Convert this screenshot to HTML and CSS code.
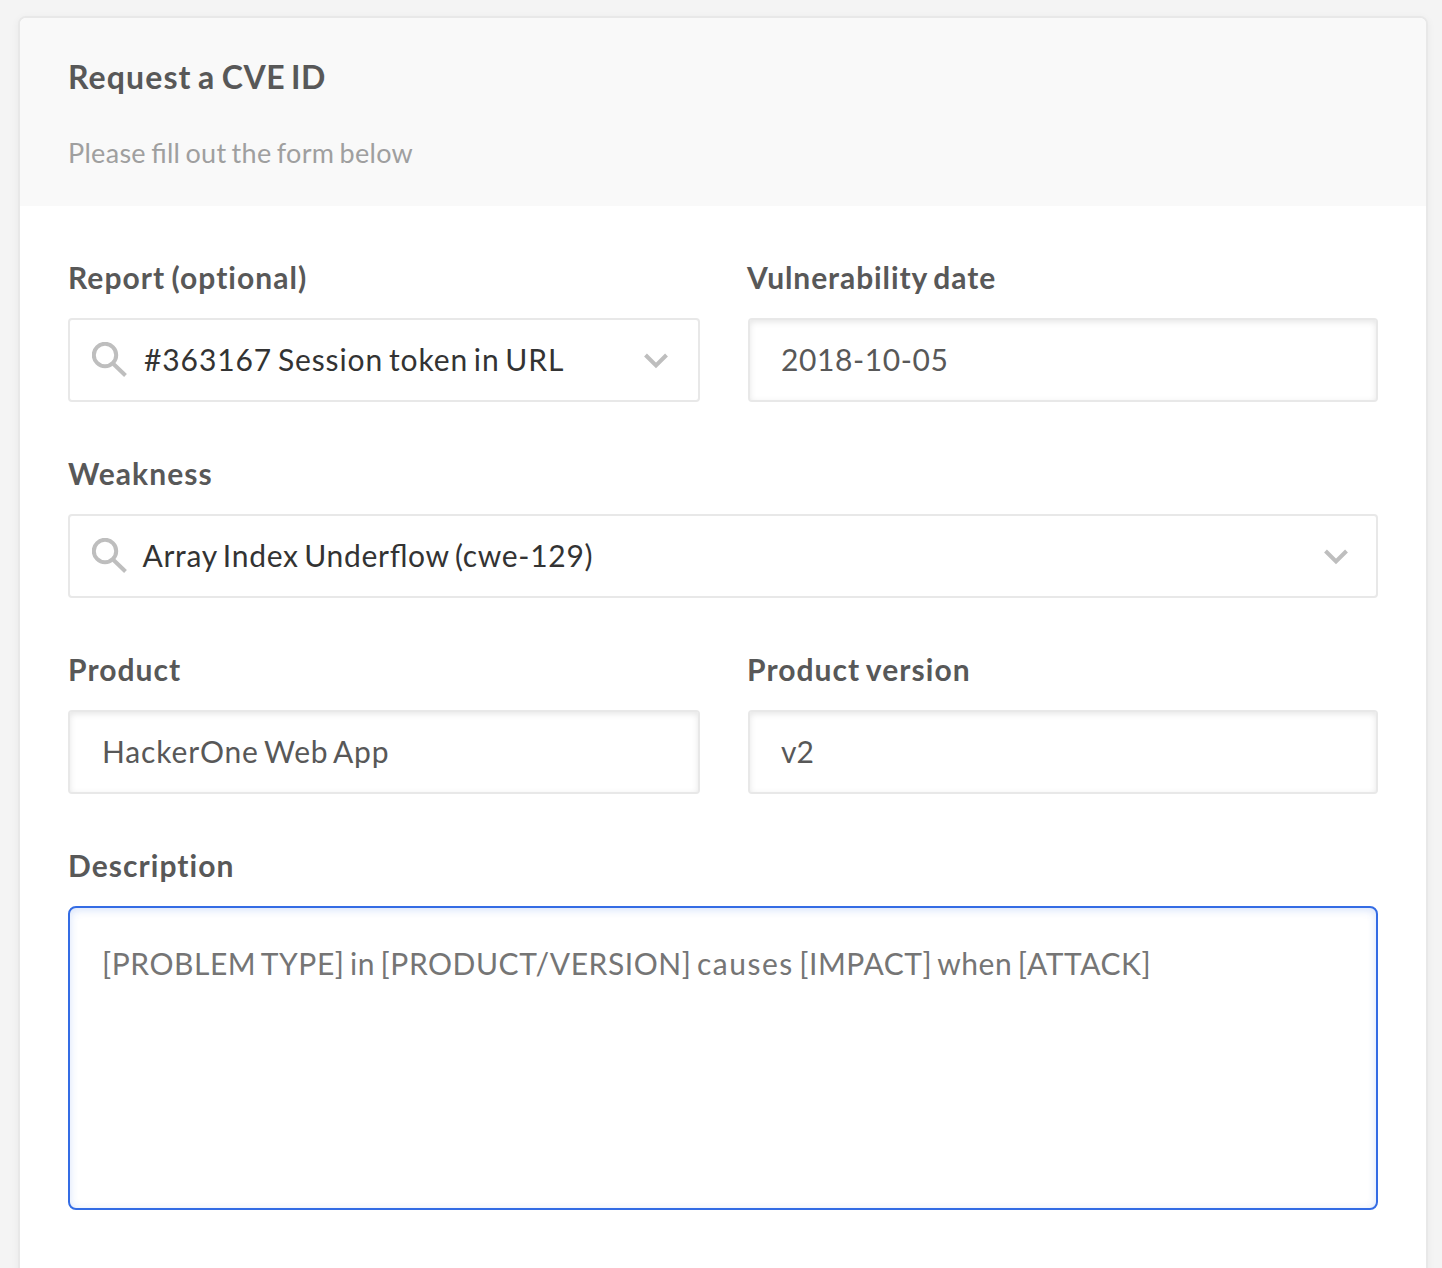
FILE: index.html
```html
<!DOCTYPE html>
<html lang="en">
<head>
<meta charset="utf-8">
<title>Request a CVE ID</title>
<link rel="stylesheet" href="styles.css">
</head>
<body>
<main class="card">
  <header class="card-header">
    <h1 class="title">Request a <span class="acronym">CVE ID</span></h1>
    <p class="subtitle">Please fill out the form below</p>
  </header>
  <form class="form">
    <div class="field">
      <label class="label">Report (optional)</label>
      <div class="select">
        <svg class="search" viewBox="0 0 36 36"><circle cx="13" cy="13" r="11.200"/><path d="M21.500 22 33.500 33.500"/></svg>
        <span class="report-value">#363167 Session token in URL</span>
        <svg class="chevron" viewBox="0 0 24 16"><path d="m1.500 2 10.500 10.500L22.500 2"/></svg>
      </div>
    </div>
    <div class="field right">
      <label class="label date-label">Vulnerability date</label>
      <div class="input"><span class="date">2018-10-05</span></div>
    </div>
    <div class="field wide">
      <label class="label">Weakness</label>
      <div class="select">
        <svg class="search" viewBox="0 0 36 36"><circle cx="13" cy="13" r="11.200"/><path d="M21.500 22 33.500 33.500"/></svg>
        <span class="weakness-value">Array Index Underflow (cwe-129)</span>
        <svg class="chevron" viewBox="0 0 24 16"><path d="m1.500 2 10.500 10.500L22.500 2"/></svg>
      </div>
    </div>
    <div class="field">
      <label class="label">Product</label>
      <div class="input"><span class="product">HackerOne Web App</span></div>
    </div>
    <div class="field right">
      <label class="label">Product version</label>
      <div class="input"><span>v2</span></div>
    </div>
    <div class="field wide">
      <label class="label">Description</label>
      <div class="textarea">[PROBLEM TYPE] in [PRODUCT/VERSION] <span class="lowercase">causes</span> [IMPACT] when [ATTACK]</div>
    </div>
  </form>
</main>
</body>
</html>
```
FILE: styles.css
```css
* { box-sizing: border-box; }
body {
  margin: 0;
  height: 1268px;
  padding: 16px 14px 0 18px;
  overflow: hidden;
  background: #f4f4f4;
  color: #585858;
  font-family: Lato, "Liberation Sans", sans-serif;
}
.card {
  height: 1300px;
  border: 2px solid #e8e8e8;
  border-radius: 8px;
  background: #fff;
  box-shadow: 0 2px 8px rgba(0, 0, 0, .05);
  overflow: hidden;
}
.card-header {
  height: 188px;
  padding: 37px 48px 0;
  background: #f9f9f9;
}
.title {
  margin: 0;
  font-size: 32px;
  line-height: 44px;
  font-weight: 700;
  letter-spacing: 1.1px;
  word-spacing: -2.4px;
}
.acronym { letter-spacing: .5px; }
.subtitle {
  margin: 36px 0 0;
  font-size: 27px;
  line-height: 36px;
  color: #9f9f9f;
  letter-spacing: .3px;
  word-spacing: -2px;
  font-feature-settings: "liga" 1;
}
.form {
  display: grid;
  grid-template-columns: 632px 630px;
  gap: 51px 48px;
  padding: 51px 48px 0;
}
.wide { grid-column: 1 / -1; }
.label {
  display: block;
  height: 61px;
  font-size: 30px;
  line-height: 40px;
  font-weight: 700;
  letter-spacing: 1.05px;
  word-spacing: -2px;
}
.date-label { letter-spacing: .9px; word-spacing: -2.3px; }
.right .label { margin-left: -1px; }
.select, .input {
  display: flex;
  align-items: center;
  height: 84px;
  border: 2px solid #e8e8e8;
  border-radius: 4px;
  font-size: 30px;
  line-height: 40px;
  white-space: nowrap;
}
.select { padding: 0 30px 2px 22px; color: #333; }
.wide .select { padding-right: 28px; }
.input { padding: 0 32px 2px; box-shadow: inset 0 2px 6px rgba(0, 0, 0, .1); }
.right .input { padding-left: 31px; }
.search {
  width: 36px;
  height: 36px;
  margin: 2px 16px 0 0;
  fill: none;
  stroke: #bebebe;
  stroke-width: 4;
}
.chevron {
  width: 24px;
  height: 16px;
  margin: 4px 0 0 auto;
  fill: none;
  stroke: #bebebe;
  stroke-width: 4;
}
.report-value { letter-spacing: .9px; word-spacing: -2.8px; }
.weakness-value {
  margin-left: -1.5px;
  letter-spacing: .7px;
  word-spacing: -2.7px;
  font-feature-settings: "liga" 1;
}
.date { letter-spacing: .6px; }
.product { letter-spacing: .85px; word-spacing: -3px; }
.textarea {
  height: 304px;
  padding: 35px 32px;
  border: 2px solid #346ce4;
  border-radius: 8px;
  box-shadow: inset 0 2px 8px rgba(52, 108, 228, .2);
  font-size: 30px;
  line-height: 40px;
  color: #757575;
  white-space: nowrap;
  letter-spacing: .55px;
  word-spacing: -2.7px;
}
.lowercase { letter-spacing: 1.5px; }
```
